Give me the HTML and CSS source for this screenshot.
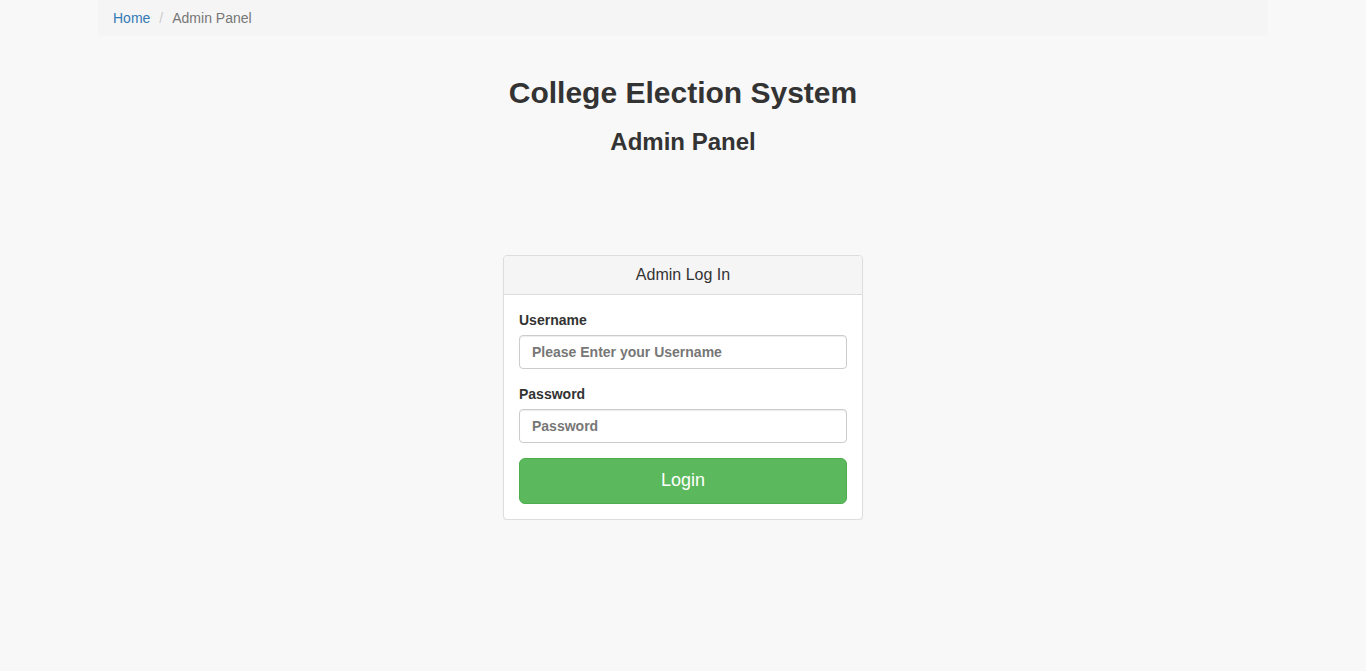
FILE: index.html
```html
<!DOCTYPE html>
<html lang="en">
<head>
<meta charset="utf-8">
<title>Admin Panel</title>
<link rel="stylesheet" href="styles.css">
</head>
<body>
<div class="container">
  <ol class="breadcrumb">
    <li><a href="#">Home</a></li>
    <li class="active">Admin Panel</li>
  </ol>
  <header class="titles">
    <h1>College Election System</h1>
    <h2>Admin Panel</h2>
  </header>
  <div class="login-col">
    <div class="panel">
      <div class="panel-heading">Admin Log In</div>
      <div class="panel-body">
        <form>
          <div class="form-group">
            <label for="user">Username</label>
            <input id="user" class="form-control" type="text" placeholder="Please Enter your Username">
          </div>
          <div class="form-group">
            <label for="pass">Password</label>
            <input id="pass" class="form-control" type="password" placeholder="Password">
          </div>
          <button type="button" class="btn-login">Login</button>
        </form>
      </div>
    </div>
  </div>
</div>
</body>
</html>
```
FILE: styles.css
```css
* { box-sizing: border-box; }
html, body { margin: 0; padding: 0; }
body {
  background: #f8f8f8;
  font-family: "Liberation Sans", Arial, Helvetica, sans-serif;
  font-size: 14px;
  line-height: 20px;
  color: #333;
}
.container {
  width: 1170px;
  margin: 0 auto;
}
.breadcrumb {
  list-style: none;
  margin: 0;
  padding: 8px 15px;
  background: #f5f5f5;
  border-radius: 0 0 4px 4px;
  display: flex;
}
.breadcrumb li { color: #777; }
.breadcrumb li + li::before {
  content: "/";
  color: #ccc;
  padding: 0 9px 0 9px;
}
.breadcrumb a { color: #337ab7; text-decoration: none; }
.titles { text-align: center; padding-top: 40px; }
.titles h1 {
  font-size: 30px;
  line-height: 33px;
  font-weight: 700;
  margin: 0 0 20px;
}
.titles h2 {
  font-size: 24px;
  line-height: 26px;
  font-weight: 700;
  margin: 0;
}
.login-col {
  width: 360px;
  margin: 100px auto 0;
}
.panel {
  background: #fff;
  border: 1px solid #ddd;
  border-radius: 4px;
  box-shadow: 0 1px 1px rgba(0,0,0,0.05);
}
.panel-heading {
  background: #f5f5f5;
  border-bottom: 1px solid #ddd;
  border-radius: 3px 3px 0 0;
  padding: 9px 15px 9px;
  text-align: center;
  font-size: 16px;
  line-height: 20px;
}
.panel-body { padding: 15px; }
.form-group { margin-bottom: 15px; }
.form-group label {
  display: block;
  font-weight: 700;
  margin-bottom: 5px;
}
.form-control {
  display: block;
  width: 100%;
  height: 34px;
  padding: 6px 12px;
  font-family: inherit;
  font-size: 14px;
  font-weight: 700;
  color: #555;
  background: #fff;
  border: 1px solid #ccc;
  border-radius: 4px;
  box-shadow: inset 0 1px 1px rgba(0,0,0,0.075);
  outline: none;
}
.form-control::placeholder { color: #777; opacity: 1; }
.btn-login {
  display: block;
  width: 100%;
  height: 46px;
  padding: 9px 16px 11px;
  font-family: inherit;
  font-size: 18px;
  line-height: 24px;
  color: #fff;
  background: #5cb85c;
  border: 1px solid #4cae4c;
  border-radius: 6px;
  cursor: pointer;
}
```
